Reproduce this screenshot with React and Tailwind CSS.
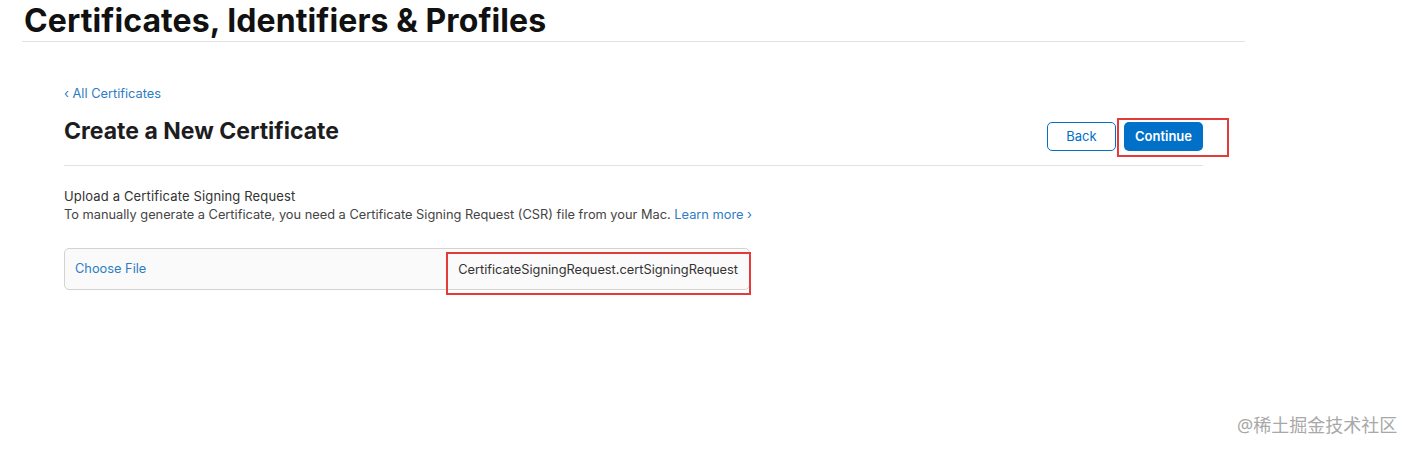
import React from 'react';

const App = () => {
  return (
    <div className="relative w-[1413px] h-[451px] bg-white font-['Inter',sans-serif] text-[#1d1d1f] overflow-hidden">
      {/* Page title */}
      <div className="ml-[22px] w-[1223px] border-b border-[#e2e2e2]">
        <h1 className="pl-[2px] text-[32px] leading-[41px] font-bold tracking-[0.1px] text-[#111]">
          Certificates, Identifiers &amp; Profiles
        </h1>
      </div>

      <div className="ml-[64px] w-[1139px]">
        <div className="pt-[44px] text-[12.8px] leading-[16px] text-[#2d7dc4]">‹ All Certificates</div>

        {/* Header */}
        <div className="flex items-start justify-between mt-[14px] pb-[14px] border-b border-[#e2e2e2]">
          <h2 className="text-[23px] leading-[30px] font-bold text-[#1d1d1f]">Create a New Certificate</h2>
          <div className="flex items-center gap-2 mt-[6px]">
            <button className="w-[69px] h-[29px] rounded-[5px] border border-[#0070c9] text-[13px] text-[#0070c9] bg-white">
              Back
            </button>
            <button className="w-[79px] h-[29px] rounded-[5px] bg-[#0070c9] text-[13px] font-semibold text-white">
              Continue
            </button>
          </div>
        </div>

        {/* Upload */}
        <div className="pt-[21px]">
          <div className="text-[13px] leading-[18px] tracking-[0.15px] text-[#333]">Upload a Certificate Signing Request</div>
          <div className="text-[12.8px] leading-[20px] text-[#444]">
            To manually generate a Certificate, you need a Certificate Signing Request (CSR) file from your Mac.{' '}
            <span className="text-[#2d7dc4]">Learn more ›</span>
          </div>
        </div>

        <div className="mt-[23px] w-[686px] h-[42px] flex items-center justify-between rounded-[5px] border border-[#d2d2d2] bg-[#fafafa] pl-[10px] pr-[11px]">
          <span className="text-[12.8px] text-[#2d7dc4]">Choose File</span>
          <span className="text-[12.8px] text-[#333] pt-[2px]">CertificateSigningRequest.certSigningRequest</span>
        </div>
      </div>

      {/* annotation boxes */}
      <div className="absolute left-[1117px] top-[118px] w-[112px] h-[39px] border-[2.5px] border-[#e53a3a]" />
      <div className="absolute left-[446px] top-[252px] w-[305px] h-[43px] border-[2.5px] border-[#e53a3a]" />

      {/* watermark */}
      <div className="absolute left-[1237px] top-[413px] text-[18px] leading-[24px] text-[#a8a8a8] font-['Noto_Sans','Noto_Sans_CJK_SC',sans-serif]">
        @稀土掘金技术社区
      </div>
    </div>
  );
};

export default App;
